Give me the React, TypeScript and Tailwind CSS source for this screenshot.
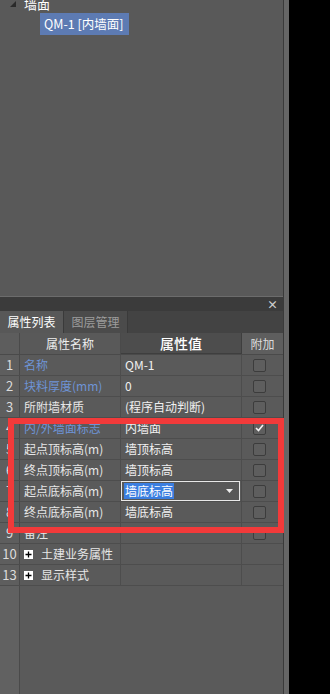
import React from "react";

type Row = {
  no: string;
  name: string;
  value?: string;
  blue?: boolean;
  check?: "none" | "off" | "on";
  group?: boolean;
  editing?: boolean;
};

const rows: Row[] = [
  { no: "1", name: "名称", value: "QM-1", blue: true, check: "off" },
  { no: "2", name: "块料厚度(mm)", value: "0", blue: true, check: "off" },
  { no: "3", name: "所附墙材质", value: "(程序自动判断)", check: "off" },
  { no: "4", name: "内/外墙面标志", value: "内墙面", blue: true, check: "on" },
  { no: "5", name: "起点顶标高(m)", value: "墙顶标高", check: "off" },
  { no: "6", name: "终点顶标高(m)", value: "墙顶标高", check: "off" },
  { no: "7", name: "起点底标高(m)", value: "墙底标高", check: "off", editing: true },
  { no: "8", name: "终点底标高(m)", value: "墙底标高", check: "off" },
  { no: "9", name: "备注", value: "", check: "off" },
  { no: "10", name: "土建业务属性", group: true, check: "none" },
  { no: "13", name: "显示样式", group: true, check: "none" },
];

function CheckBox({ on }: { on: boolean }) {
  return (
    <div className="w-[13px] h-[13px] rounded-[2px] border border-[#3c3c3c] bg-[#5e5e5e] flex items-center justify-center">
      {on && (
        <svg width="9" height="8" viewBox="0 0 9 8" fill="none">
          <path d="M1 4 L3.5 6.5 L8 1" stroke="#f2f2f2" strokeWidth="1.6" />
        </svg>
      )}
    </div>
  );
}

function PlusBox() {
  return (
    <div className="w-[9px] h-[9px] bg-white flex items-center justify-center">
      <svg width="7" height="7" viewBox="0 0 7 7">
        <path d="M0.5 3.5 H6.5 M3.5 0.5 V6.5" stroke="#000" strokeWidth="1.3" />
      </svg>
    </div>
  );
}

export default function App() {
  const font = { fontFamily: '"Noto Sans CJK SC", "Liberation Sans", sans-serif' };
  return (
    <div className="flex w-[330px] h-[694px] bg-black overflow-hidden text-[12px] text-[#e6e6e6]" style={font}>
      <div className="w-[283px] flex flex-col">
        {/* tree panel */}
        <div className="h-[296px] bg-[#595959] overflow-hidden">
          <div className="-mt-[6px] flex items-center h-[19px] pl-[10px]">
            <svg width="6" height="6" viewBox="0 0 6 6" className="mr-[8px]">
              <path d="M6 0 L6 6 L0 6 Z" fill="#2a2a2a" />
            </svg>
            <span className="text-[13px] leading-none text-white">墙面</span>
          </div>
          <div className="ml-[40px] w-[89px] h-[22px] bg-[#5d7bb3] flex items-center pl-[4px] text-[12.5px] text-white whitespace-nowrap">
            QM-1 [内墙面]
          </div>
        </div>
        <div className="h-[1px] bg-[#6c6c6c]" />
        <div className="h-[14px] bg-[#3b3b3b] flex items-center justify-end pr-[5px]">
          <span className="text-[11px] leading-none text-[#cfcfcf] font-bold">×</span>
        </div>
        {/* tabs */}
        <div className="h-[22px] bg-[#434343] flex items-stretch">
          <div className="w-[63px] bg-[#585858] flex items-center justify-center text-white text-[12px]">属性列表</div>
          <div className="w-[65px] bg-[#4b4b4b] border-l border-[#3a3a3a] border-r flex items-center justify-center text-[#9c9c9c] text-[12px]">
            图层管理
          </div>
        </div>
        {/* table */}
        <div className="relative flex-1 bg-[#5a5a5a] flex flex-col">
          <div className="flex h-[22px] border-b border-[#4a4a4a]">
            <div className="w-[20px] bg-[#5d5d5d] border-r border-[#4a4a4a]" />
            <div className="w-[101px] bg-[#595959] border-r border-[#4a4a4a] flex items-center justify-center text-[12px] text-[#eeeeee]">
              属性名称
            </div>
            <div className="w-[121px] bg-[#4d4d4d] border-r border-b border-[#3e3e3e] flex items-center justify-center text-[14px] text-white font-medium">
              属性值
            </div>
            <div className="flex-1 bg-[#5e5e5e] flex items-center justify-center text-[#dcdcdc] text-[12px]">附加</div>
          </div>
          {rows.map((r) => (
            <div key={r.no} className="flex h-[21px] border-b border-[#4d4d4d]">
              <div className="w-[20px] bg-[#5e5e5e] border-r border-[#4a4a4a] flex items-center justify-center text-[#dcdcdc] text-[13px]">
                {r.no}
              </div>
              <div
                className={
                  "w-[101px] border-r border-[#4d4d4d] flex items-center gap-[8px] pl-[4px] whitespace-nowrap " +
                  (r.blue ? "text-[#6e94d6]" : "text-[#e6e6e6]")
                }
              >
                {r.group && <PlusBox />}
                <span>{r.name}</span>
              </div>
              <div className="w-[121px] border-r border-[#4d4d4d] flex items-center">
                {r.editing ? (
                  <div className="w-[119px] h-[20px] border border-[#e8e8e8] bg-[#585858] flex items-center pl-[2px] pr-[6px] justify-between">
                    <span className="bg-[#3b7ee0] text-white px-[1px] leading-[16px]">{r.value}</span>
                    <svg width="7" height="4" viewBox="0 0 7 4">
                      <path d="M0 0 H7 L3.5 4 Z" fill="#eeeeee" />
                    </svg>
                  </div>
                ) : (
                  <span className="pl-[4px] text-[#f0f0f0]">{r.value}</span>
                )}
              </div>
              <div className="flex-1 flex items-center pl-[11px]">
                {r.check !== "none" && <CheckBox on={r.check === "on"} />}
              </div>
            </div>
          ))}
          <div className="flex-1 flex">
            <div className="w-[20px] bg-[#616161] border-r border-[#4a4a4a]" />
            <div className="flex-1" />
          </div>
          {/* red highlight */}
          <div className="absolute left-[8px] top-[85px] w-[276px] h-[115px] border-[6px] border-[#f23a3a]" />
        </div>
      </div>
      <div className="w-[1px] bg-[#3a3a3a]" />
      <div className="w-[5px] bg-[#666666]" />
      <div className="flex-1 bg-black" />
    </div>
  );
}
